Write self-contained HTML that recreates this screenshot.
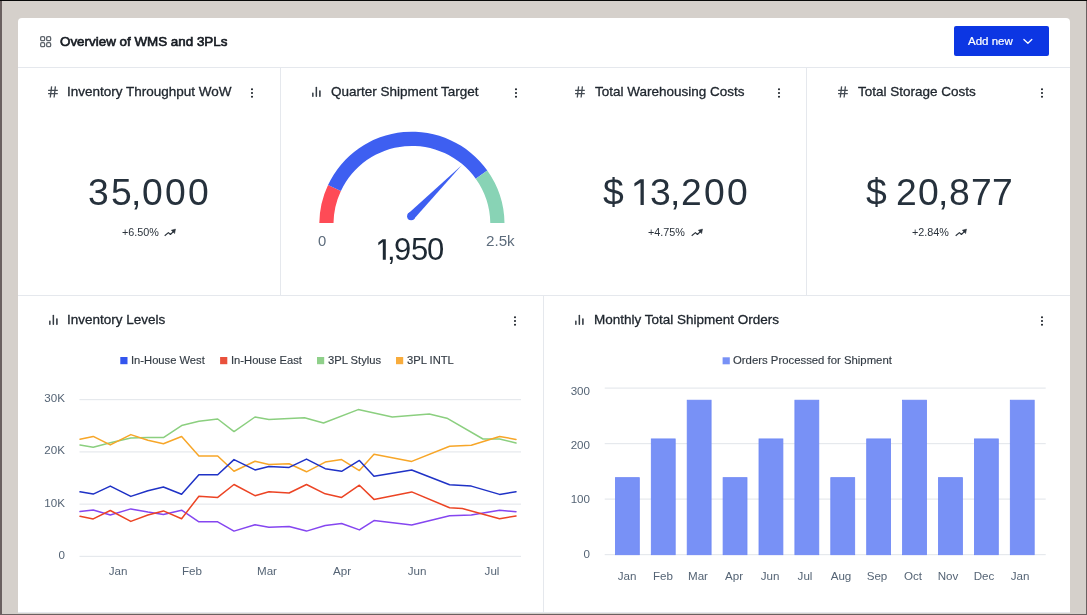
<!DOCTYPE html>
<html><head><meta charset="utf-8"><title>Overview of WMS and 3PLs</title>
<style>
*{margin:0;padding:0;box-sizing:border-box}
html,body{width:1087px;height:615px;overflow:hidden}
body{background:#d5d0cb;position:relative;font-family:"Liberation Sans", sans-serif}
.t{position:absolute;white-space:nowrap;line-height:1;will-change:transform}
svg{overflow:visible}
</style></head><body>
<div style="position:absolute;left:0;top:0;width:2px;height:615px;background:#6a6060"></div>
<div style="position:absolute;right:0;top:0;width:1.4px;height:615px;background:#6a6060"></div>
<div style="position:absolute;left:0;top:0;width:1087px;height:1.4px;background:#080808"></div>
<div style="position:absolute;left:0;bottom:0;width:1087px;height:1.5px;background:#6a6060"></div>
<div style="position:absolute;left:18px;top:18px;width:1052px;height:595px;background:#fff;border-radius:4px 4px 0 0"></div>
<div style="position:absolute;left:18px;top:67px;width:1052px;height:1px;background:#e5e8ed"></div>
<div style="position:absolute;left:18px;top:295px;width:1052px;height:1px;background:#e5e8ed"></div>
<div style="position:absolute;left:18px;top:612px;width:1052px;height:1px;background:#e5e8ed"></div>
<div style="position:absolute;left:280px;top:68px;width:1px;height:227px;background:#e5e8ed"></div>
<div style="position:absolute;left:806px;top:68px;width:1px;height:227px;background:#e5e8ed"></div>
<div style="position:absolute;left:543px;top:296px;width:1px;height:316px;background:#e5e8ed"></div>
<svg style="position:absolute;left:39px;top:34.5px" width="14" height="14" viewBox="0 0 14 14" fill="none" stroke="#5f656d" stroke-width="1.3">
<rect x="1.65" y="1.65" width="4" height="4" rx="1.25"/><rect x="7.65" y="1.65" width="4" height="4" rx="1.25"/>
<rect x="1.65" y="7.65" width="4" height="4" rx="1.25"/><rect x="7.65" y="7.65" width="4" height="4" rx="1.25"/></svg>
<div class="t" style="left:60.30px;top:34.56px;font-size:13.4px;color:#161b22;font-weight:normal;-webkit-text-stroke:0.65px #161b22;">Overview of WMS and 3PLs</div>
<div style="position:absolute;left:954px;top:26px;width:95px;height:30px;background:#0c36e3;border-radius:2px"></div>
<div class="t" style="left:967.80px;top:36.07px;font-size:11.5px;color:#ffffff;font-weight:normal;-webkit-text-stroke:0.2px #fff;">Add new</div>
<svg style="position:absolute;left:1022px;top:37.5px" width="12" height="9" viewBox="0 0 12 9" fill="none" stroke="#fff" stroke-width="1.3" stroke-linecap="round" stroke-linejoin="round"><path d="M1.9 1.5 L5.9 5.3 L9.8 1.5"/></svg>
<svg style="position:absolute;left:47px;top:85px" width="12" height="13" viewBox="0 0 12 13" fill="none" stroke="#444b53" stroke-width="1.3">
<path d="M4.6 1.4 L3.3 12.5 M8.4 1.4 L7.1 12.5 M1.1 5.3 H10.8 M1.1 8.6 H10.8"/></svg>
<div class="t" style="left:66.80px;top:84.67px;font-size:13.5px;color:#20272f;font-weight:normal;-webkit-text-stroke:0.3px #20272f;">Inventory Throughput WoW</div>
<svg style="position:absolute;left:250px;top:87px" width="4" height="12" viewBox="0 0 4 12" fill="#1f252c">
<circle cx="2" cy="2.2" r="1.05"/><circle cx="2" cy="6" r="1.05"/><circle cx="2" cy="9.8" r="1.05"/></svg>
<svg style="position:absolute;left:311px;top:86px" width="11" height="12" viewBox="0 0 11 12" fill="#353c44">
<rect x="1.1" y="6.4" width="1.5" height="4.6" rx="0.7"/><rect x="4.6" y="0.7" width="1.5" height="10.3" rx="0.7"/><rect x="8.1" y="4.3" width="1.6" height="6.7" rx="0.7"/></svg>
<div class="t" style="left:330.50px;top:84.67px;font-size:13.5px;color:#20272f;font-weight:normal;-webkit-text-stroke:0.3px #20272f;">Quarter Shipment Target</div>
<svg style="position:absolute;left:514px;top:87px" width="4" height="12" viewBox="0 0 4 12" fill="#1f252c">
<circle cx="2" cy="2.2" r="1.05"/><circle cx="2" cy="6" r="1.05"/><circle cx="2" cy="9.8" r="1.05"/></svg>
<svg style="position:absolute;left:574px;top:85px" width="12" height="13" viewBox="0 0 12 13" fill="none" stroke="#444b53" stroke-width="1.3">
<path d="M4.6 1.4 L3.3 12.5 M8.4 1.4 L7.1 12.5 M1.1 5.3 H10.8 M1.1 8.6 H10.8"/></svg>
<div class="t" style="left:595.00px;top:84.67px;font-size:13.5px;color:#20272f;font-weight:normal;-webkit-text-stroke:0.3px #20272f;">Total Warehousing Costs</div>
<svg style="position:absolute;left:777px;top:87px" width="4" height="12" viewBox="0 0 4 12" fill="#1f252c">
<circle cx="2" cy="2.2" r="1.05"/><circle cx="2" cy="6" r="1.05"/><circle cx="2" cy="9.8" r="1.05"/></svg>
<svg style="position:absolute;left:837px;top:85px" width="12" height="13" viewBox="0 0 12 13" fill="none" stroke="#444b53" stroke-width="1.3">
<path d="M4.6 1.4 L3.3 12.5 M8.4 1.4 L7.1 12.5 M1.1 5.3 H10.8 M1.1 8.6 H10.8"/></svg>
<div class="t" style="left:858.20px;top:84.67px;font-size:13.5px;color:#20272f;font-weight:normal;-webkit-text-stroke:0.3px #20272f;">Total Storage Costs</div>
<svg style="position:absolute;left:1040.4px;top:87px" width="4" height="12" viewBox="0 0 4 12" fill="#1f252c">
<circle cx="2" cy="2.2" r="1.05"/><circle cx="2" cy="6" r="1.05"/><circle cx="2" cy="9.8" r="1.05"/></svg>
<div class="t" style="left:88.14px;top:173.53px;font-size:37.3px;color:#26313c;font-weight:normal;">3</div>
<div class="t" style="left:110.91px;top:173.53px;font-size:37.3px;color:#26313c;font-weight:normal;">5</div>
<div class="t" style="left:130.97px;top:173.53px;font-size:37.3px;color:#26313c;font-weight:normal;">,</div>
<div class="t" style="left:141.93px;top:173.53px;font-size:37.3px;color:#26313c;font-weight:normal;">0</div>
<div class="t" style="left:164.88px;top:173.53px;font-size:37.3px;color:#26313c;font-weight:normal;">0</div>
<div class="t" style="left:187.88px;top:173.53px;font-size:37.3px;color:#26313c;font-weight:normal;">0</div>
<svg style="position:absolute;left:0;top:0" width="1087" height="615"><path d="M643.80 179.20 L640.20 179.20 L634.40 183.30 L634.40 186.60 L640.50 182.80 L640.50 204.90 L643.80 204.90 Z" fill="#26313c"/></svg>
<div class="t" style="left:603.38px;top:173.53px;font-size:37.3px;color:#26313c;font-weight:normal;">$</div>
<div class="t" style="left:649.74px;top:173.53px;font-size:37.3px;color:#26313c;font-weight:normal;">3</div>
<div class="t" style="left:670.27px;top:173.53px;font-size:37.3px;color:#26313c;font-weight:normal;">,</div>
<div class="t" style="left:681.28px;top:173.53px;font-size:37.3px;color:#26313c;font-weight:normal;">2</div>
<div class="t" style="left:703.88px;top:173.53px;font-size:37.3px;color:#26313c;font-weight:normal;">0</div>
<div class="t" style="left:726.88px;top:173.53px;font-size:37.3px;color:#26313c;font-weight:normal;">0</div>
<div class="t" style="left:865.88px;top:173.53px;font-size:37.3px;color:#26313c;font-weight:normal;">$</div>
<div class="t" style="left:895.58px;top:173.53px;font-size:37.3px;color:#26313c;font-weight:normal;">2</div>
<div class="t" style="left:918.38px;top:173.53px;font-size:37.3px;color:#26313c;font-weight:normal;">0</div>
<div class="t" style="left:938.42px;top:173.53px;font-size:37.3px;color:#26313c;font-weight:normal;">,</div>
<div class="t" style="left:949.43px;top:173.53px;font-size:37.3px;color:#26313c;font-weight:normal;">8</div>
<div class="t" style="left:970.76px;top:173.53px;font-size:37.3px;color:#26313c;font-weight:normal;">7</div>
<div class="t" style="left:991.96px;top:173.53px;font-size:37.3px;color:#26313c;font-weight:normal;">7</div>
<div class="t" style="left:121.60px;top:227.26px;font-size:10.8px;color:#2a323b;font-weight:normal;">+6.50%</div>
<svg style="position:absolute;left:164px;top:228px" width="13" height="9" viewBox="0 0 13 9" fill="none" stroke="#2a323b" stroke-width="1.15" stroke-linejoin="round">
<path d="M0.7 7.7 L4.4 4.6 L6.4 6.5 L9.6 3.3"/><path d="M7.3 2.2 L11.5 1.1 L10.6 5.6 Z" fill="#2a323b" stroke-width="0.5"/></svg>
<div class="t" style="left:648.20px;top:227.26px;font-size:10.8px;color:#2a323b;font-weight:normal;">+4.75%</div>
<svg style="position:absolute;left:691px;top:228px" width="13" height="9" viewBox="0 0 13 9" fill="none" stroke="#2a323b" stroke-width="1.15" stroke-linejoin="round">
<path d="M0.7 7.7 L4.4 4.6 L6.4 6.5 L9.6 3.3"/><path d="M7.3 2.2 L11.5 1.1 L10.6 5.6 Z" fill="#2a323b" stroke-width="0.5"/></svg>
<div class="t" style="left:912.00px;top:227.26px;font-size:10.8px;color:#2a323b;font-weight:normal;">+2.84%</div>
<svg style="position:absolute;left:954.5px;top:228px" width="13" height="9" viewBox="0 0 13 9" fill="none" stroke="#2a323b" stroke-width="1.15" stroke-linejoin="round">
<path d="M0.7 7.7 L4.4 4.6 L6.4 6.5 L9.6 3.3"/><path d="M7.3 2.2 L11.5 1.1 L10.6 5.6 Z" fill="#2a323b" stroke-width="0.5"/></svg>
<svg style="position:absolute;left:0;top:0" width="1087" height="615" viewBox="0 0 1087 615">
<defs><clipPath id="gc"><rect x="300" y="100" width="240" height="123"/></clipPath></defs><g clip-path="url(#gc)">
<path d="M319.30 224.30 A92.6 92.6 0 0 1 328.04 185.02 L340.90 191.04 A78.4 78.4 0 0 0 333.50 224.30 Z" fill="#fe4b56"/>
<path d="M328.04 185.02 A92.6 92.6 0 0 1 487.29 170.53 L475.73 178.77 A78.4 78.4 0 0 0 340.90 191.04 Z" fill="#3e5ff1"/>
<path d="M487.29 170.53 A92.6 92.6 0 0 1 504.50 224.30 L490.30 224.30 A78.4 78.4 0 0 0 475.73 178.77 Z" fill="#88d3b5"/>
</g>
<path d="M413.94 219.02 L461.70 165.30 L408.26 213.38 Z" fill="#3e5ff1"/>
<circle cx="411.1" cy="216.2" r="4.0" fill="#3e5ff1"/>
<rect x="79.5" y="399.00" width="441.5" height="1.2" fill="#e6e9ed"/>
<rect x="79.5" y="451.30" width="441.5" height="1.2" fill="#e6e9ed"/>
<rect x="79.5" y="503.55" width="441.5" height="1.2" fill="#e6e9ed"/>
<rect x="79.5" y="555.80" width="441.5" height="1.2" fill="#e6e9ed"/>
<polyline points="80.0,445.0 93.2,447.2 110.3,442.8 130.8,438.0 147.9,437.6 163.4,437.6 181.6,425.6 198.9,421.3 217.7,419.0 234.0,431.6 255.0,417.0 268.9,419.4 289.1,418.5 304.5,417.7 323.5,423.0 358.2,409.6 392.3,417.0 429.3,414.0 446.9,418.2 483.0,439.0 499.6,439.0 516.0,443.1" fill="none" stroke="#8bcf7f" stroke-width="1.5" stroke-linejoin="round" stroke-linecap="round"/>
<polyline points="80.0,439.2 93.2,436.4 110.3,444.9 130.8,434.6 147.9,440.3 163.4,443.7 181.6,436.5 198.9,456.0 217.7,456.0 234.0,471.3 255.0,461.3 268.9,464.5 289.1,463.8 306.5,471.8 325.2,462.1 341.6,459.6 359.4,470.6 374.0,454.3 411.7,461.4 449.6,446.3 471.3,445.3 499.6,436.5 516.0,439.4" fill="none" stroke="#f7a628" stroke-width="1.5" stroke-linejoin="round" stroke-linecap="round"/>
<polyline points="80.0,511.6 93.2,510.0 110.3,515.0 130.8,508.9 147.9,512.1 163.4,514.4 181.6,510.2 198.9,521.8 217.7,521.8 234.0,531.1 255.0,524.8 268.9,527.2 289.1,526.5 306.5,531.1 325.2,525.5 341.6,523.5 359.4,529.9 374.0,520.6 411.7,524.9 449.6,515.8 471.3,515.1 499.6,510.2 516.0,511.7" fill="none" stroke="#8546f0" stroke-width="1.5" stroke-linejoin="round" stroke-linecap="round"/>
<polyline points="80.0,516.2 93.2,518.9 110.3,510.5 130.8,521.4 147.9,515.0 163.4,510.9 181.6,518.7 198.9,496.2 217.7,497.4 234.0,484.5 255.0,495.7 268.9,491.8 289.1,493.0 306.5,484.5 325.2,493.8 341.6,497.4 359.4,485.2 374.0,499.4 411.7,491.9 449.6,507.8 462.3,508.5 499.6,518.8 516.0,515.9" fill="none" stroke="#ec4424" stroke-width="1.5" stroke-linejoin="round" stroke-linecap="round"/>
<polyline points="80.0,491.8 93.2,494.1 110.3,486.1 130.8,496.4 147.9,490.7 163.4,487.0 181.6,494.2 198.9,474.8 217.7,474.8 234.0,459.6 255.0,469.9 268.9,466.5 289.1,467.4 306.5,459.1 325.2,468.7 341.6,471.3 359.4,460.4 374.0,476.2 411.7,470.0 449.6,484.8 471.3,486.1 499.6,494.4 516.0,491.7" fill="none" stroke="#1f32c6" stroke-width="1.5" stroke-linejoin="round" stroke-linecap="round"/>
<rect x="120.3" y="357" width="7.2" height="7.2" fill="#3355ee"/>
<rect x="220.1" y="357" width="7.2" height="7.2" fill="#e9513c"/>
<rect x="317" y="357" width="7.2" height="7.2" fill="#8fd08a"/>
<rect x="396" y="357" width="7.2" height="7.2" fill="#f8ac3c"/>
<rect x="604.7" y="387.50" width="441" height="1.2" fill="#e6e9ed"/>
<rect x="604.7" y="443.00" width="441" height="1.2" fill="#e6e9ed"/>
<rect x="604.7" y="498.50" width="441" height="1.2" fill="#e6e9ed"/>
<rect x="604.7" y="554.00" width="441" height="1.2" fill="#e6e9ed"/>
<rect x="615.40" y="477.65" width="23.9" height="77.05" fill="#7891f6" stroke="#6d87f5" stroke-width="0.8"/>
<rect x="651.30" y="438.92" width="23.9" height="115.78" fill="#7891f6" stroke="#6d87f5" stroke-width="0.8"/>
<rect x="687.20" y="400.20" width="23.9" height="154.50" fill="#7891f6" stroke="#6d87f5" stroke-width="0.8"/>
<rect x="723.10" y="477.65" width="23.9" height="77.05" fill="#7891f6" stroke="#6d87f5" stroke-width="0.8"/>
<rect x="759.00" y="438.92" width="23.9" height="115.78" fill="#7891f6" stroke="#6d87f5" stroke-width="0.8"/>
<rect x="794.90" y="400.20" width="23.9" height="154.50" fill="#7891f6" stroke="#6d87f5" stroke-width="0.8"/>
<rect x="830.80" y="477.65" width="23.9" height="77.05" fill="#7891f6" stroke="#6d87f5" stroke-width="0.8"/>
<rect x="866.70" y="438.92" width="23.9" height="115.78" fill="#7891f6" stroke="#6d87f5" stroke-width="0.8"/>
<rect x="902.60" y="400.20" width="23.9" height="154.50" fill="#7891f6" stroke="#6d87f5" stroke-width="0.8"/>
<rect x="938.50" y="477.65" width="23.9" height="77.05" fill="#7891f6" stroke="#6d87f5" stroke-width="0.8"/>
<rect x="974.40" y="438.92" width="23.9" height="115.78" fill="#7891f6" stroke="#6d87f5" stroke-width="0.8"/>
<rect x="1010.30" y="400.20" width="23.9" height="154.50" fill="#7891f6" stroke="#6d87f5" stroke-width="0.8"/>
<rect x="722.6" y="357.3" width="7.2" height="7" fill="#7891f6"/>
</svg>
<div class="t" style="left:318.20px;top:234.07px;font-size:14.8px;color:#5d6c7c;font-weight:normal;">0</div>
<div class="t" style="left:485.50px;top:233.23px;font-size:15.2px;color:#5d6c7c;font-weight:normal;">2.5k</div>
<svg style="position:absolute;left:0;top:0" width="1087" height="615"><path d="M385.80 239.20 L382.50 239.20 L378.30 242.40 L378.30 245.20 L382.80 241.90 L382.80 259.80 L385.80 259.80 Z" fill="#1e2933"/></svg>
<div class="t" style="left:386.79px;top:233.76px;font-size:31px;color:#1e2933;font-weight:normal;">,</div>
<div class="t" style="left:393.89px;top:233.76px;font-size:31px;color:#1e2933;font-weight:normal;">9</div>
<div class="t" style="left:410.86px;top:233.76px;font-size:31px;color:#1e2933;font-weight:normal;">5</div>
<div class="t" style="left:427.38px;top:233.76px;font-size:31px;color:#1e2933;font-weight:normal;">0</div>
<svg style="position:absolute;left:47.5px;top:313.5px" width="11" height="12" viewBox="0 0 11 12" fill="#353c44">
<rect x="1.1" y="6.4" width="1.5" height="4.6" rx="0.7"/><rect x="4.6" y="0.7" width="1.5" height="10.3" rx="0.7"/><rect x="8.1" y="4.3" width="1.6" height="6.7" rx="0.7"/></svg>
<div class="t" style="left:66.80px;top:312.67px;font-size:13.5px;color:#20272f;font-weight:normal;-webkit-text-stroke:0.3px #20272f;">Inventory Levels</div>
<svg style="position:absolute;left:513.4px;top:314.6px" width="4" height="12" viewBox="0 0 4 12" fill="#1f252c">
<circle cx="2" cy="2.2" r="1.05"/><circle cx="2" cy="6" r="1.05"/><circle cx="2" cy="9.8" r="1.05"/></svg>
<svg style="position:absolute;left:574.3px;top:314px" width="11" height="12" viewBox="0 0 11 12" fill="#353c44">
<rect x="1.1" y="6.4" width="1.5" height="4.6" rx="0.7"/><rect x="4.6" y="0.7" width="1.5" height="10.3" rx="0.7"/><rect x="8.1" y="4.3" width="1.6" height="6.7" rx="0.7"/></svg>
<div class="t" style="left:594.00px;top:312.67px;font-size:13.5px;color:#20272f;font-weight:normal;-webkit-text-stroke:0.3px #20272f;">Monthly Total Shipment Orders</div>
<svg style="position:absolute;left:1040.2px;top:314.6px" width="4" height="12" viewBox="0 0 4 12" fill="#1f252c">
<circle cx="2" cy="2.2" r="1.05"/><circle cx="2" cy="6" r="1.05"/><circle cx="2" cy="9.8" r="1.05"/></svg>
<div class="t" style="left:130.70px;top:355.02px;font-size:11.2px;color:#333b44;font-weight:normal;-webkit-text-stroke:0.15px #333b44;">In-House West</div>
<div class="t" style="left:230.90px;top:355.02px;font-size:11.2px;color:#333b44;font-weight:normal;-webkit-text-stroke:0.15px #333b44;">In-House East</div>
<div class="t" style="left:327.50px;top:355.02px;font-size:11.2px;color:#333b44;font-weight:normal;-webkit-text-stroke:0.15px #333b44;">3PL Stylus</div>
<div class="t" style="left:406.90px;top:355.02px;font-size:11.2px;color:#333b44;font-weight:normal;-webkit-text-stroke:0.15px #333b44;">3PL INTL</div>
<div class="t" style="left:733.00px;top:354.89px;font-size:11.35px;color:#333b44;font-weight:normal;-webkit-text-stroke:0.15px #333b44;">Orders Processed for Shipment</div>
<div class="t" style="left:-934.70px;width:1000px;text-align:right;top:392.18px;font-size:11.6px;color:#556475;font-weight:normal;">30K</div>
<div class="t" style="left:-934.70px;width:1000px;text-align:right;top:444.48px;font-size:11.6px;color:#556475;font-weight:normal;">20K</div>
<div class="t" style="left:-934.70px;width:1000px;text-align:right;top:496.73px;font-size:11.6px;color:#556475;font-weight:normal;">10K</div>
<div class="t" style="left:-934.70px;width:1000px;text-align:right;top:548.98px;font-size:11.6px;color:#556475;font-weight:normal;">0</div>
<div class="t" style="left:-382.50px;width:1000px;text-align:center;top:565.38px;font-size:11.6px;color:#556475;font-weight:normal;">Jan</div>
<div class="t" style="left:-307.60px;width:1000px;text-align:center;top:565.38px;font-size:11.6px;color:#556475;font-weight:normal;">Feb</div>
<div class="t" style="left:-232.60px;width:1000px;text-align:center;top:565.38px;font-size:11.6px;color:#556475;font-weight:normal;">Mar</div>
<div class="t" style="left:-157.70px;width:1000px;text-align:center;top:565.38px;font-size:11.6px;color:#556475;font-weight:normal;">Apr</div>
<div class="t" style="left:-82.80px;width:1000px;text-align:center;top:565.38px;font-size:11.6px;color:#556475;font-weight:normal;">Jun</div>
<div class="t" style="left:-7.90px;width:1000px;text-align:center;top:565.38px;font-size:11.6px;color:#556475;font-weight:normal;">Jul</div>
<div class="t" style="left:-409.70px;width:1000px;text-align:right;top:385.38px;font-size:11.6px;color:#556475;font-weight:normal;">300</div>
<div class="t" style="left:-409.70px;width:1000px;text-align:right;top:439.38px;font-size:11.6px;color:#556475;font-weight:normal;">200</div>
<div class="t" style="left:-409.70px;width:1000px;text-align:right;top:493.48px;font-size:11.6px;color:#556475;font-weight:normal;">100</div>
<div class="t" style="left:-409.70px;width:1000px;text-align:right;top:548.08px;font-size:11.6px;color:#556475;font-weight:normal;">0</div>
<div class="t" style="left:126.80px;width:1000px;text-align:center;top:570.18px;font-size:11.6px;color:#556475;font-weight:normal;">Jan</div>
<div class="t" style="left:162.52px;width:1000px;text-align:center;top:570.18px;font-size:11.6px;color:#556475;font-weight:normal;">Feb</div>
<div class="t" style="left:198.24px;width:1000px;text-align:center;top:570.18px;font-size:11.6px;color:#556475;font-weight:normal;">Mar</div>
<div class="t" style="left:233.96px;width:1000px;text-align:center;top:570.18px;font-size:11.6px;color:#556475;font-weight:normal;">Apr</div>
<div class="t" style="left:269.68px;width:1000px;text-align:center;top:570.18px;font-size:11.6px;color:#556475;font-weight:normal;">Jun</div>
<div class="t" style="left:305.40px;width:1000px;text-align:center;top:570.18px;font-size:11.6px;color:#556475;font-weight:normal;">Jul</div>
<div class="t" style="left:341.12px;width:1000px;text-align:center;top:570.18px;font-size:11.6px;color:#556475;font-weight:normal;">Aug</div>
<div class="t" style="left:376.84px;width:1000px;text-align:center;top:570.18px;font-size:11.6px;color:#556475;font-weight:normal;">Sep</div>
<div class="t" style="left:412.56px;width:1000px;text-align:center;top:570.18px;font-size:11.6px;color:#556475;font-weight:normal;">Oct</div>
<div class="t" style="left:448.28px;width:1000px;text-align:center;top:570.18px;font-size:11.6px;color:#556475;font-weight:normal;">Nov</div>
<div class="t" style="left:484.00px;width:1000px;text-align:center;top:570.18px;font-size:11.6px;color:#556475;font-weight:normal;">Dec</div>
<div class="t" style="left:519.72px;width:1000px;text-align:center;top:570.18px;font-size:11.6px;color:#556475;font-weight:normal;">Jan</div>
</body></html>
